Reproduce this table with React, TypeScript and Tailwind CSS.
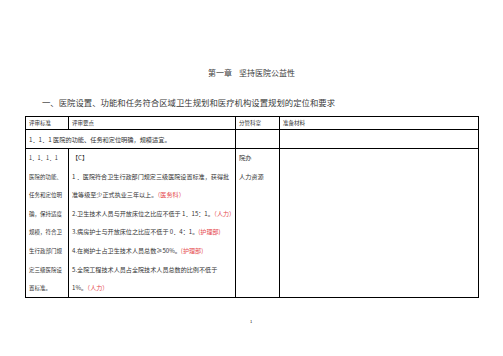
import React from "react";

const F = { fontFamily: '"Noto Sans CJK SC", "Noto Sans", sans-serif' };

function Red({ children }: { children: React.ReactNode }) {
  return <span className="text-[#e5484d]">{children}</span>;
}

const col1 = ["1．1．1．1", "医院的功能、", "任务和定位明", "确，保持适度", "规模，符合卫", "生行政部门规", "定三级医院设", "置标准。"];

const col2: React.ReactNode[] = [
  "【C】",
  "1 ．医院符合卫生行政部门规定三级医院设置标准，获得批",
  <>准等级至少正式执业三年以上。<Red>（医务科）</Red></>,
  <>2.卫生技术人员与开放床位之比应不低于 1．15：1。<Red>（人力）</Red></>,
  <>3.病房护士与开放床位之比应不低于 0．4：1。<Red>(护理部)</Red></>,
  <>4.在岗护士占卫生技术人员总数≥50%。<Red>(护理部)</Red></>,
  "5.全院工程技术人员占全院技术人员总数的比例不低于",
  <>1%。<Red>（人力）</Red></>,
];

const col3 = ["院办", "人力资源"];

export default function App() {
  return (
    <div className="w-[503px] h-[356px] bg-white text-black flex flex-col" style={F}>
      <div className="pt-[68px] h-[78px] leading-[10px] text-[8px] text-center text-[#3a3a3a] whitespace-nowrap">
        <span className="mr-[7px]">第一章</span>坚持医院公益性
      </div>
      <div className="mt-[18px] pl-[42px] h-[12px] leading-[12px] text-[8.4px] text-[#3a3a3a] whitespace-nowrap">
        一、医院设置、功能和任务符合区域卫生规划和医疗机构设置规划的定位和要求
      </div>
      <div className="mt-[8px] ml-[25px] w-[454px] border border-black text-[5.5px] text-[#333] whitespace-nowrap">
        <div className="grid grid-cols-[43px_167px_44px_1fr] h-[13px] border-b border-black leading-[12px]">
          <div className="pl-[3px] border-r border-black">评审标准</div>
          <div className="pl-[3px] border-r border-black">评审要点</div>
          <div className="pl-[3px] border-r border-black">分管科室</div>
          <div className="pl-[3px]">准备材料</div>
        </div>
        <div className="grid grid-cols-[210px_44px_1fr] h-[19px] border-b border-black leading-[19px]">
          <div className="pl-[3px] border-r border-black text-[6.2px]">1．1．1 医院的功能、任务和定位明确，规模适宜。</div>
          <div className="border-r border-black" />
          <div />
        </div>
        <div className="grid grid-cols-[43px_167px_44px_1fr] h-[148px]">
          <div className="pl-[3px] border-r border-black flex flex-col">
            {col1.map((t, i) => (
              <div key={i} className="h-[18.6px] leading-[18.6px]">{t}</div>
            ))}
          </div>
          <div className="pl-[3px] border-r border-black flex flex-col text-[6.1px] overflow-hidden">
            {col2.map((t, i) => (
              <div key={i} className="h-[18.6px] leading-[18.6px]">{t}</div>
            ))}
          </div>
          <div className="pl-[3px] border-r border-black flex flex-col text-[6.2px]">
            {col3.map((t, i) => (
              <div key={i} className="h-[18.6px] leading-[18.6px]">{t}</div>
            ))}
          </div>
          <div />
        </div>
      </div>
      <div className="mt-[21px] pl-[250px] text-[4px] leading-[5px] text-black">1</div>
    </div>
  );
}
